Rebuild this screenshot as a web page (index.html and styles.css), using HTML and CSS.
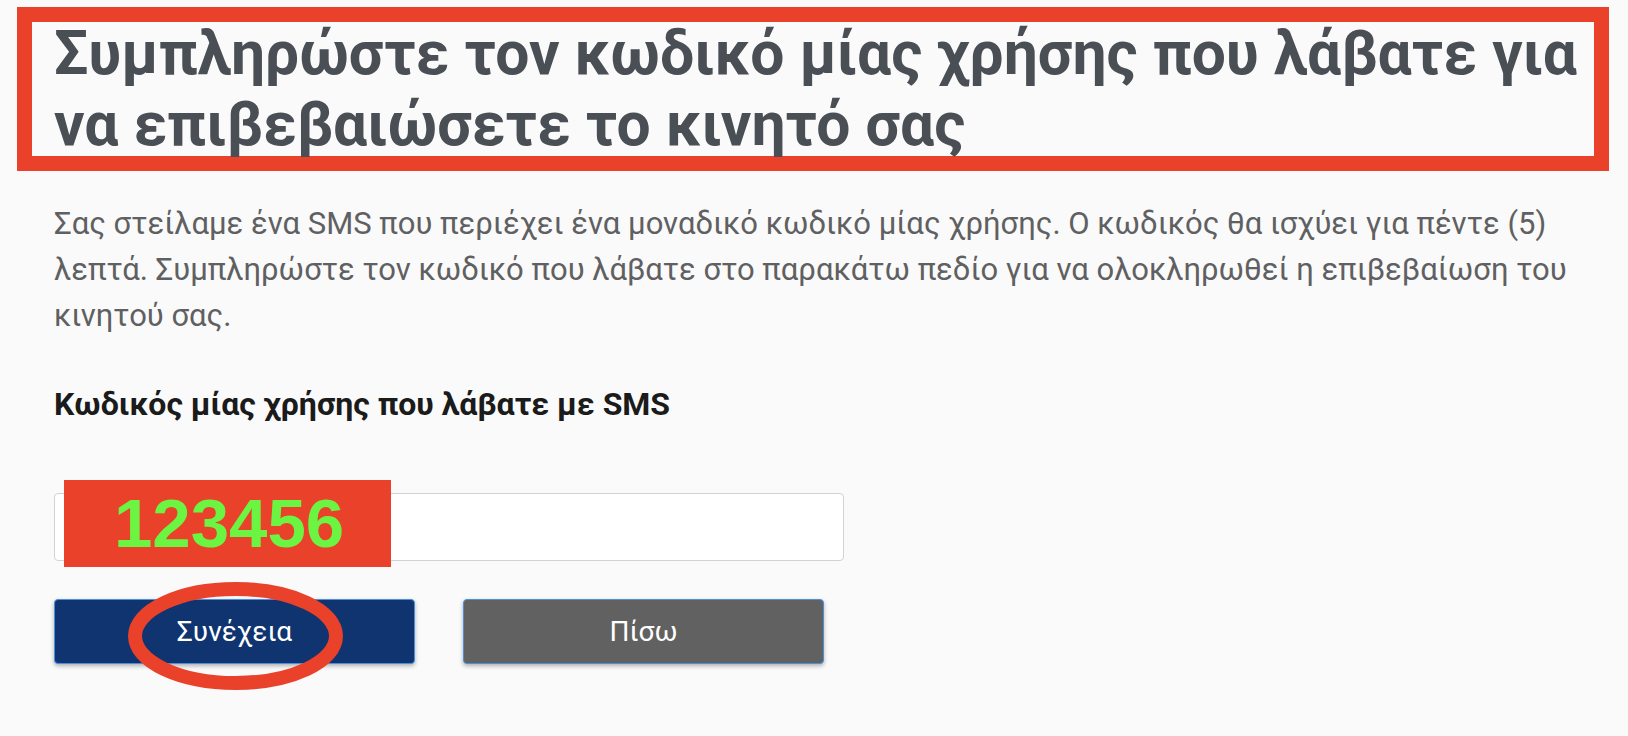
FILE: index.html
```html
<!DOCTYPE html>
<html lang="el">
<head>
    <meta charset="UTF-8">
    <meta name="viewport" content="width=device-width, initial-scale=1.0">
    <title>Επιβεβαίωση κινητού</title>
    <link rel="stylesheet" href="styles.css">
</head>
<body>

    <main class="page">
        <!-- Heading, marked with a red frame -->
        <div class="title-box">
            <h1 class="title">Συμπληρώστε τον κωδικό μίας χρήσης που λάβατε για να επιβεβαιώσετε το κινητό σας</h1>
        </div>

        <p class="intro">Σας στείλαμε ένα SMS που περιέχει ένα μοναδικό κωδικό μίας χρήσης. Ο κωδικός θα ισχύει για πέντε (5) λεπτά. Συμπληρώστε τον κωδικό που λάβατε στο παρακάτω πεδίο για να ολοκληρωθεί η επιβεβαίωση του κινητού σας.</p>

        <form class="otp-form">
            <label class="otp-label" for="otp">Κωδικός μίας χρήσης που λάβατε με SMS</label>

            <div class="otp-field">
                <input class="otp-input" type="text" id="otp" name="otp">
                <span class="otp-tag">123456</span>
            </div>

            <div class="actions">
                <button type="submit" class="btn btn-primary">Συνέχεια</button>
                <button type="button" class="btn btn-secondary">Πίσω</button>
                <!-- red circle drawn round the continue button -->
                <svg class="ring" width="215" height="108" viewBox="0 0 215 108">
                    <ellipse cx="107.5" cy="54" rx="100.5" ry="47" fill="none" stroke="#e9412a" stroke-width="14"/>
                </svg>
            </div>
        </form>
    </main>

</body>
</html>
```

FILE: styles.css
```css
body {
    margin: 0;
    background-color: #fafafa;
    font-family: Roboto, "Noto Sans", sans-serif;
}
.page {
    padding: 7px 19px 72px 17px;
}

/* red frame round the title */
.title-box {
    box-sizing: border-box;
    height: 164px;
    border: 15px solid #e9412a;
    padding: 0 10px 0 22px;
}
.title {
    margin: -4px 0 0;
    font-size: 60.5px;
    line-height: 71px;
    font-weight: 700;
    color: #4a4f55;
}

.intro {
    margin: 30px 0 0 37px;
    max-width: 1550px;
    font-size: 31px;
    line-height: 46px;
    color: #5f6062;
}

.otp-form {
    margin-left: 37px;
}
.otp-label {
    display: block;
    margin-top: 46px;
    font-size: 32px;
    line-height: 38px;
    font-weight: 700;
    color: #1b1b1b;
}
.otp-field {
    position: relative;
    width: 790px;
    margin-top: 70px;
}
.otp-input {
    box-sizing: border-box;
    display: block;
    width: 790px;
    height: 68px;
    border: 1px solid #ced4da;
    border-radius: 4px;
    background: #fff;
}
.otp-tag {
    position: absolute;
    left: 10px;
    top: -13px;
    width: 327px;
    height: 87px;
    box-sizing: border-box;
    padding-left: 50px;
    background: #e9412a;
    color: #6cf442;
    font-family: "Liberation Sans", Arial, sans-serif;
    font-weight: 700;
    font-size: 69px;
    line-height: 87px;
}

.actions {
    position: relative;
    display: flex;
    gap: 48px;
    margin-top: 38px;
}
.btn {
    width: 361px;
    height: 65px;
    border: 1px solid #4a8fe0;
    border-radius: 4px;
    color: #fff;
    font-family: Roboto, "Noto Sans", sans-serif;
    font-size: 28px;
    box-shadow: 0 2px 4px rgba(0, 0, 0, 0.3);
}
.btn-primary {
    background-color: #0f3470;
}
.btn-secondary {
    background-color: #616161;
}

/* red circle round the continue button text */
.ring {
    position: absolute;
    left: 74px;
    top: -17px;
    filter: blur(0.5px);
}
```
